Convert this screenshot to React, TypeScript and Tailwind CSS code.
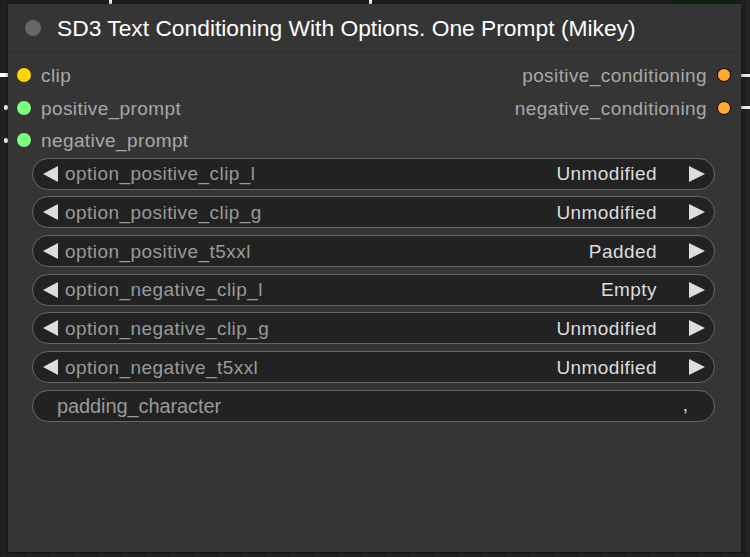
import React from "react";

const font = { fontFamily: '"Liberation Sans", Arial, sans-serif' };

const combos: [string, string][] = [
  ["option_positive_clip_l", "Unmodified"],
  ["option_positive_clip_g", "Unmodified"],
  ["option_positive_t5xxl", "Padded"],
  ["option_negative_clip_l", "Empty"],
  ["option_negative_clip_g", "Unmodified"],
  ["option_negative_t5xxl", "Unmodified"],
];

function LeftTri() {
  return (
    <svg width="15" height="16" viewBox="0 0 15 16" className="shrink-0">
      <polygon points="15,0 15,16 0,8" fill="#dddddd" />
    </svg>
  );
}
function RightTri() {
  return (
    <svg width="16" height="16" viewBox="0 0 16 16" className="shrink-0">
      <polygon points="0,0 0,16 16,8" fill="#dddddd" />
    </svg>
  );
}

export default function App() {
  return (
    <div
      className="relative w-[750px] h-[557px] overflow-hidden bg-[#222222] bg-[linear-gradient(#1c1c1c_1px,transparent_1px),linear-gradient(90deg,#1c1c1c_1px,transparent_1px)] bg-[size:24px_24px] pt-[4px] pl-[8px]"
      style={font}
    >
      {/* links */}
      <div className="absolute left-0 top-[73px] w-[10px] h-[4px] bg-white" />
      <div className="absolute right-0 top-[74px] w-[10px] h-[3px] bg-[#e8e8e8]" />
      <div className="absolute right-0 top-[106px] w-[10px] h-[3px] bg-[#e8e8e8]" />
      <div className="absolute left-[109px] top-0 w-[3px] h-[4px] bg-white" />
      <div className="absolute left-[369px] top-0 w-[3px] h-[4px] bg-white" />
      <div className="absolute left-[668px] top-[-8px] w-[68px] h-[11px] rounded-[6px] bg-[#0f1f0f]" />
      <div className="absolute left-[4px] top-[105px] w-[4px] h-[5px] rounded-full bg-white" />
      <div className="absolute left-[4px] top-[138px] w-[4px] h-[5px] rounded-full bg-white" />

      <div className="relative w-[733px] h-[548px] bg-[#353535] shadow-[0_0_4px_rgba(0,0,0,0.6)]">
        {/* title */}
        <div className="flex items-center h-[49px] border-b border-[#2d2d2d] pl-[17px]">
          <span className="w-[16px] h-[16px] rounded-full bg-[#666666]" />
          <span className="ml-[16px] text-[22.8px] text-white leading-none">
            SD3 Text Conditioning With Options. One Prompt (Mikey)
          </span>
        </div>

        {/* slots */}
        <div className="flex justify-between pt-[6px]">
          <div className="flex flex-col">
            {[
              ["clip", "bg-[#ffd500]"],
              ["positive_prompt", "bg-[#7cff7c]"],
              ["negative_prompt", "bg-[#7cff7c]"],
            ].map(([label, c]) => (
              <div key={label} className="flex items-center h-[32.5px] pl-[9px]">
                <span className={`w-[14px] h-[14px] rounded-full ${c}`} />
                <span className="ml-[10px] text-[19px] text-[#a8a8a8] tracking-[0.4px] translate-y-[1px]">
                  {label}
                </span>
              </div>
            ))}
          </div>
          <div className="flex flex-col">
            {["positive_conditioning", "negative_conditioning"].map((label) => (
              <div key={label} className="flex items-center justify-end h-[32.5px] pr-[10px]">
                <span className="mr-[10px] text-[19px] text-[#a8a8a8] tracking-[0.4px] translate-y-[1px]">
                  {label}
                </span>
                <span className="w-[14px] h-[14px] rounded-full border border-black bg-[#ffa931]" />
              </div>
            ))}
          </div>
        </div>

        {/* widgets */}
        <div className="flex flex-col gap-[6.7px] pl-[24px] pr-[26px] mt-[1px]">
          {combos.map(([name, val]) => (
            <div
              key={name}
              className="flex items-center h-[32px] rounded-full border border-[#666666] bg-[#222222] pl-[10px] pr-[9px]"
            >
              <LeftTri />
              <span className="ml-[7px] text-[19px] text-[#999999] tracking-[0.45px] translate-y-[1px]">{name}</span>
              <span className="ml-auto text-[19px] text-[#dddddd] tracking-[0.45px] translate-y-[1px]">{val}</span>
              <span className="ml-[32px]">
                <RightTri />
              </span>
            </div>
          ))}
          <div className="flex items-center h-[32px] rounded-full border border-[#666666] bg-[#222222] pl-[24px] pr-[26px]">
            <span className="text-[20px] text-[#999999] tracking-[-0.1px]">padding_character</span>
            <span className="ml-auto text-[19px] text-[#dddddd]">,</span>
          </div>
        </div>
      </div>
    </div>
  );
}
